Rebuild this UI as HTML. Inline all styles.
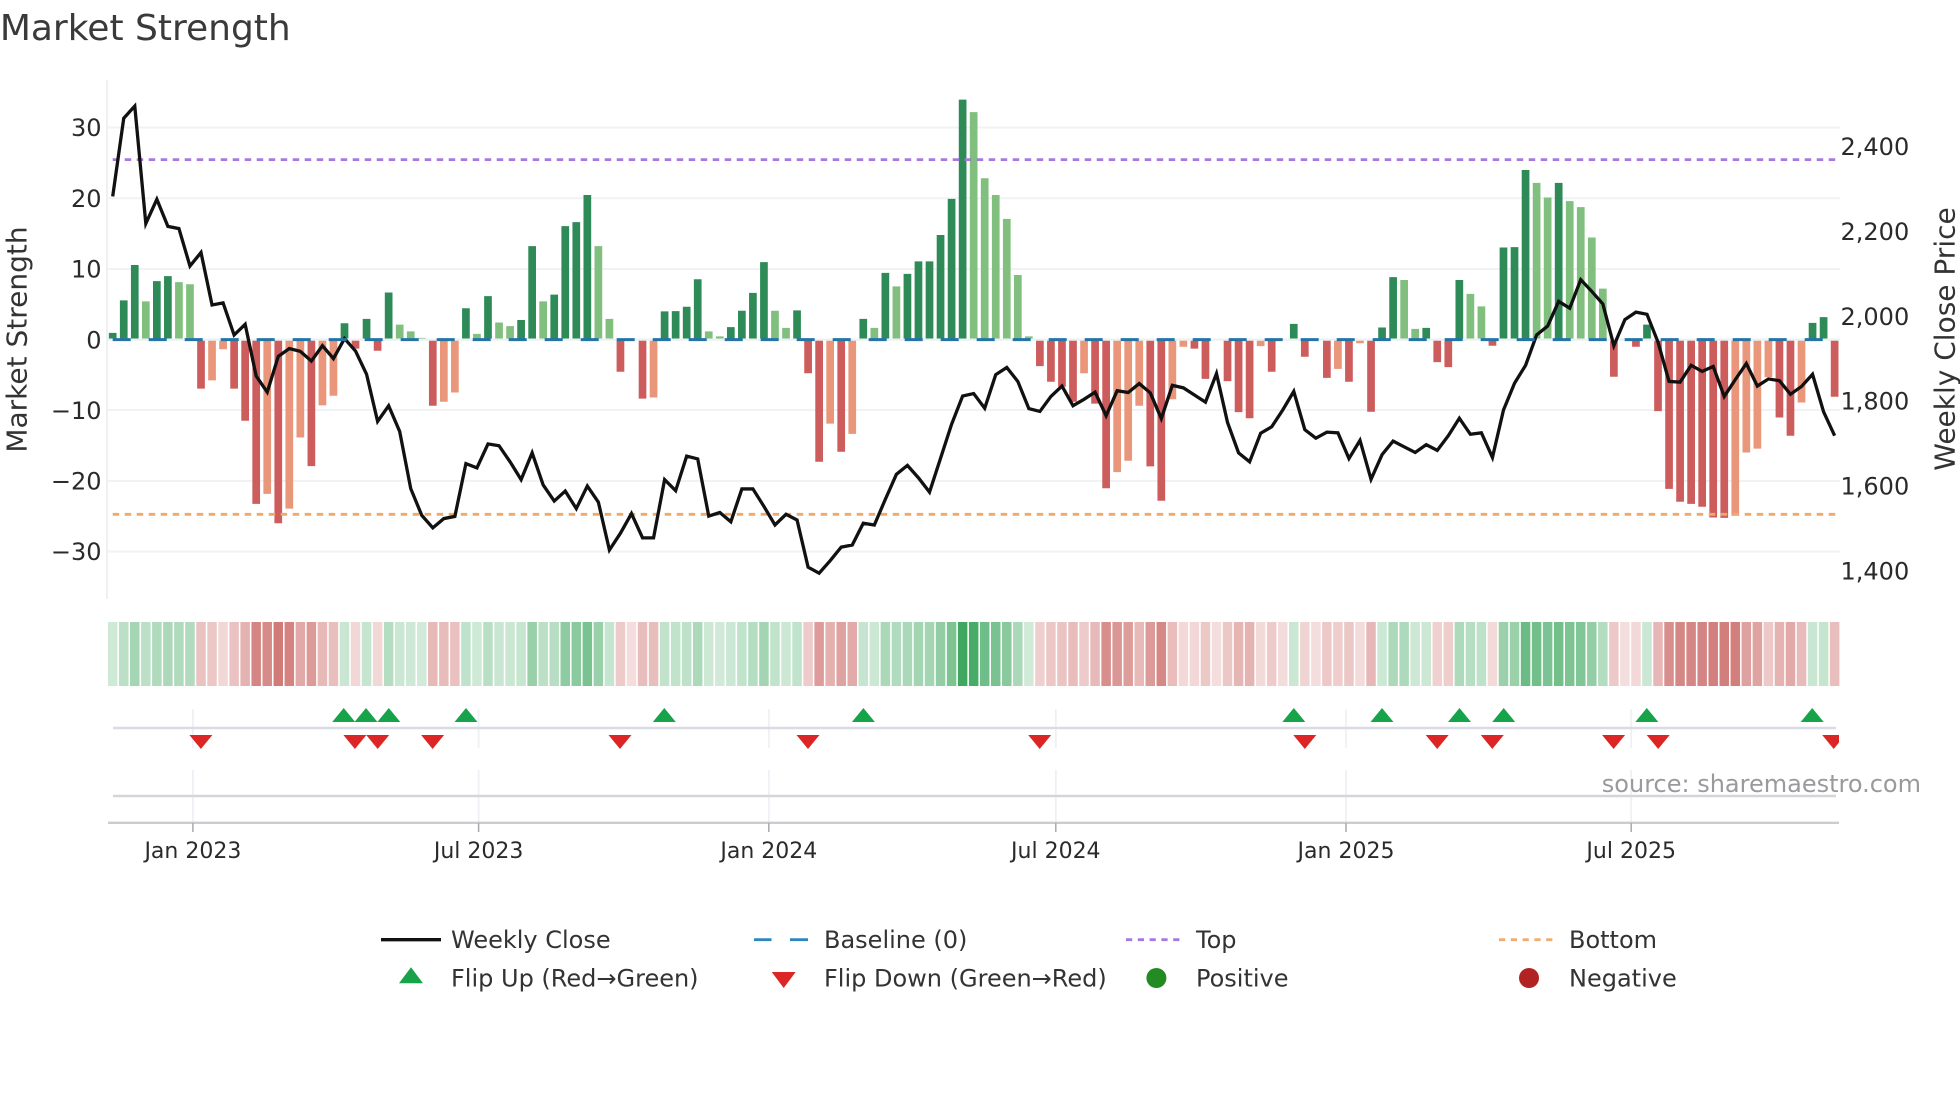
<!DOCTYPE html>
<html lang="en"><head><meta charset="utf-8"><title>Market Strength</title>
<style>
html,body{margin:0;padding:0;background:#fff;width:1960px;height:1102px;overflow:hidden}
svg{display:block}
text{font-family:"DejaVu Sans","Liberation Sans",sans-serif}
.nss path,.nss polyline{vector-effect:non-scaling-stroke}
</style></head><body>
<svg width="1960" height="1102" viewBox="0 0 1960 1102" xmlns="http://www.w3.org/2000/svg">
<rect width="1960" height="1102" fill="#fff"/>
<text x="-0.2" y="40" font-size="36" fill="#3a3a3a">Market Strength</text>

<!-- grid -->
<path d="M107 80V599" stroke="#eceef1" stroke-width="1.8" fill="none"/>
<path d="M108 127.5H1840M108 198.3H1840M108 269H1840M108 410H1840M108 481H1840M108 551.5H1840" stroke="#f0f2f6" stroke-width="2" fill="none"/>

<!-- bars -->
<g class="nss" transform="translate(112.7 60) scale(11.038 .35714)" fill="none" stroke-width="7.7">
<path stroke="#2e8b57" d="M0 782V764M1 782V673M2 782V574M4 782V619M5 782V605M21 782V737M23 782V725M25 782V651M32 782V695M34 782V661M37 782V728M38 782V521M40 782V657M41 782V465M42 782V454M43 782V378M50 782V704M51 782V703M52 782V691M53 782V614M56 782V748M57 782V702M58 782V652M59 782V566M62 782V701M68 782V725M70 782V596M72 782V599M73 782V564M74 782V564M75 782V490M76 782V389M77 782V111M107 782V739M115 782V749M116 782V608M119 782V750M122 782V616M126 782V525M127 782V524M128 782V308M131 782V344M139 782V741M154 782V736M155 782V720"/>
<path stroke="#81bf7e" d="M3 782V676M6 782V622M7 782V628M26 782V741M27 782V760M28 782V778M33 782V767M35 782V735M36 782V745M39 782V676M44 782V521M45 782V725M54 782V760M55 782V774M60 782V702M61 782V750M69 782V750M71 782V634M78 782V146M79 782V331M80 782V378M81 782V445M82 782V602M83 782V774M117 782V616M118 782V753M123 782V655M124 782V690M129 782V344M130 782V385M132 782V395M133 782V412M134 782V497M135 782V640"/>
<path stroke="#cd5c5c" d="M8 782V920M11 782V920M12 782V1010M13 782V1243M15 782V1297M18 782V1137M22 782V808M24 782V814M29 782V968M46 782V873M48 782V948M63 782V877M64 782V1125M66 782V1097M84 782V857M85 782V901M86 782V915M87 782V957M89 782V962M90 782V1199M94 782V1138M95 782V1234M98 782V808M99 782V893M101 782V899M102 782V986M103 782V1003M105 782V873M108 782V831M110 782V890M112 782V901M114 782V985M120 782V846M121 782V860M125 782V800M136 782V887M138 782V803M140 782V983M141 782V1201M142 782V1237M143 782V1243M144 782V1251M145 782V1281M146 782V1282M151 782V1001M152 782V1052M156 782V943"/>
<path stroke="#e9967a" d="M9 782V897M10 782V810M14 782V1215M16 782V1256M17 782V1057M19 782V967M20 782V940M30 782V957M31 782V931M49 782V945M65 782V1018M67 782V1047M88 782V877M91 782V1154M92 782V1122M93 782V968M96 782V950M97 782V803M104 782V801M106 782V784M111 782V865M113 782V793M137 782V785M147 782V1276M148 782V1099M149 782V1088M150 782V888M153 782V959"/>
</g>
<path d="M108 339.6H1840" stroke="#eaf2f2" stroke-width="2.2" fill="none"/>

<!-- thresholds -->
<path d="M112.7 159.6H1836" stroke="#a678e2" stroke-width="2.8" stroke-dasharray="6.5 5.5" fill="none"/>
<path d="M112.7 514.3H1836" stroke="#efa96b" stroke-width="2.8" stroke-dasharray="6.5 5.5" fill="none"/>

<!-- weekly close -->
<g class="nss" transform="translate(112.7 60) scale(11.038 .35714)" fill="none">
<polyline stroke="#111" stroke-width="3.3" stroke-linejoin="miter" stroke-miterlimit="4" points="0,382 1,163 2,129 3,458 4,390 5,466 6,472 7,577 8,539 9,686 10,680 11,770 12,740 13,885 14,930 15,830 16,808 17,816 18,843 19,800 20,836 21,780 22,815 23,880 24,1012 25,968 26,1040 27,1200 28,1275 29,1310 30,1284 31,1278 32,1130 33,1142 34,1075 35,1080 36,1125 37,1175 38,1100 39,1190 40,1235 41,1207 42,1256 43,1193 44,1238 45,1372 46,1325 47,1270 48,1338 49,1338 50,1175 51,1206 52,1109 53,1117 54,1277 55,1267 56,1293 57,1201 58,1201 59,1250 60,1302 61,1272 62,1288 63,1420 64,1437 65,1402 66,1364 67,1358 68,1297 69,1302 70,1230 71,1160 72,1135 73,1170 74,1210 75,1115 76,1020 77,941 78,934 79,975 80,881 81,861 82,900 83,976 84,984 85,942 86,913 87,968 88,950 89,930 90,996 91,926 92,931 93,906 94,932 95,1004 96,911 97,918 98,938 99,958 100,878 101,1015 102,1100 103,1125 104,1045 105,1027 106,980 107,928 108,1035 109,1059 110,1042 111,1044 112,1116 113,1065 114,1174 115,1105 116,1067 117,1083 118,1099 119,1077 120,1093 121,1052 122,1003 123,1048 124,1044 125,1113 126,980 127,905 128,855 129,770 130,745 131,676 132,695 133,615 134,648 135,683 136,800 137,727 138,706 139,712 140,790 141,900 142,902 143,855 144,872 145,858 146,942 147,895 148,850 149,913 150,893 151,898 152,936 153,914 154,880 155,985 156,1052"/>
</g>

<!-- baseline -->
<path d="M112.7 339.6H1834.7" stroke="#2474a8" stroke-width="3" stroke-dasharray="18 18" fill="none"/>

<!-- left ticks -->
<g font-size="24" fill="#2a2a2a" text-anchor="end">
<text x="101.5" y="136.2">30</text>
<text x="101.5" y="206.9">20</text>
<text x="101.5" y="277.7">10</text>
<text x="101.5" y="348.3">0</text>
<text x="101.5" y="418.8">−10</text>
<text x="101.5" y="489.7">−20</text>
<text x="101.5" y="560.2">−30</text>
</g>
<text transform="translate(26.5 339.5) rotate(-90)" font-size="28" fill="#333" text-anchor="middle">Market Strength</text>

<!-- right ticks -->
<g font-size="24" fill="#2a2a2a">
<text x="1840.5" y="154.9">2,400</text>
<text x="1840.5" y="239.9">2,200</text>
<text x="1840.5" y="324.9">2,000</text>
<text x="1840.5" y="409.7">1,800</text>
<text x="1840.5" y="494.6">1,600</text>
<text x="1840.5" y="579.5">1,400</text>
</g>
<text transform="translate(1954.5 339) rotate(-90)" font-size="28" fill="#333" text-anchor="middle">Weekly Close Price</text>

<!-- strip -->
<g class="nss" transform="translate(112.7 622) scale(11.038 1)" fill="none" stroke-width="9.5" stroke="#1a9641">
<path stroke-opacity=".05" d="M0 0V64M1 0V64M2 0V64M3 0V64M4 0V64M5 0V64M6 0V64M7 0V64M21 0V64M23 0V64M25 0V64M26 0V64M27 0V64M28 0V64M32 0V64M33 0V64M34 0V64M35 0V64M36 0V64M37 0V64M38 0V64M39 0V64M40 0V64M41 0V64M42 0V64M43 0V64M44 0V64M45 0V64M50 0V64M51 0V64M52 0V64M53 0V64M54 0V64M55 0V64M56 0V64M57 0V64M58 0V64M59 0V64M60 0V64M61 0V64M62 0V64M68 0V64M69 0V64M70 0V64M71 0V64M72 0V64M73 0V64M74 0V64M75 0V64M76 0V64M77 0V64M78 0V64M79 0V64M80 0V64M81 0V64M82 0V64M83 0V64M107 0V64M115 0V64M116 0V64M117 0V64M118 0V64M119 0V64M122 0V64M123 0V64M124 0V64M126 0V64M127 0V64M128 0V64M129 0V64M130 0V64M131 0V64M132 0V64M133 0V64M134 0V64M135 0V64M139 0V64M154 0V64M155 0V64"/>
<path stroke-opacity=".168" d="M0 0V64"/><path stroke-opacity=".26" d="M1 0V64"/><path stroke-opacity=".36" d="M2 0V64"/><path stroke-opacity=".257" d="M3 0V64"/><path stroke-opacity=".315" d="M4 0V64"/><path stroke-opacity=".329" d="M5 0V64"/><path stroke-opacity=".312" d="M6 0V64"/><path stroke-opacity=".306" d="M7 0V64"/>
<path stroke-opacity=".195" d="M21 0V64"/><path stroke-opacity=".208" d="M23 0V64"/><path stroke-opacity=".282" d="M25 0V64"/><path stroke-opacity=".191" d="M26 0V64"/><path stroke-opacity=".172" d="M27 0V64"/><path stroke-opacity=".154" d="M28 0V64"/>
<path stroke-opacity=".238" d="M32 0V64"/><path stroke-opacity=".165" d="M33 0V64"/><path stroke-opacity=".272" d="M34 0V64"/><path stroke-opacity=".197" d="M35 0V64"/><path stroke-opacity=".187" d="M36 0V64"/><path stroke-opacity=".205" d="M37 0V64"/><path stroke-opacity=".414" d="M38 0V64"/><path stroke-opacity=".257" d="M39 0V64"/><path stroke-opacity=".276" d="M40 0V64"/><path stroke-opacity=".47" d="M41 0V64"/><path stroke-opacity=".481" d="M42 0V64"/><path stroke-opacity=".558" d="M43 0V64"/><path stroke-opacity=".414" d="M44 0V64"/><path stroke-opacity=".208" d="M45 0V64"/>
<path stroke-opacity=".229" d="M50 0V64"/><path stroke-opacity=".23" d="M51 0V64"/><path stroke-opacity=".242" d="M52 0V64"/><path stroke-opacity=".32" d="M53 0V64"/><path stroke-opacity=".172" d="M54 0V64"/><path stroke-opacity=".158" d="M55 0V64"/><path stroke-opacity=".184" d="M56 0V64"/><path stroke-opacity=".231" d="M57 0V64"/><path stroke-opacity=".281" d="M58 0V64"/><path stroke-opacity=".368" d="M59 0V64"/><path stroke-opacity=".231" d="M60 0V64"/><path stroke-opacity=".182" d="M61 0V64"/><path stroke-opacity=".232" d="M62 0V64"/>
<path stroke-opacity=".208" d="M68 0V64"/><path stroke-opacity=".182" d="M69 0V64"/><path stroke-opacity=".338" d="M70 0V64"/><path stroke-opacity=".3" d="M71 0V64"/><path stroke-opacity=".335" d="M72 0V64"/><path stroke-opacity=".37" d="M73 0V64"/><path stroke-opacity=".37" d="M74 0V64"/><path stroke-opacity=".445" d="M75 0V64"/><path stroke-opacity=".547" d="M76 0V64"/><path stroke-opacity=".828" d="M77 0V64"/><path stroke-opacity=".792" d="M78 0V64"/><path stroke-opacity=".606" d="M79 0V64"/><path stroke-opacity=".558" d="M80 0V64"/><path stroke-opacity=".49" d="M81 0V64"/><path stroke-opacity=".332" d="M82 0V64"/><path stroke-opacity=".158" d="M83 0V64"/>
<path stroke-opacity=".193" d="M107 0V64"/><path stroke-opacity=".183" d="M115 0V64"/><path stroke-opacity=".326" d="M116 0V64"/><path stroke-opacity=".318" d="M117 0V64"/><path stroke-opacity=".179" d="M118 0V64"/><path stroke-opacity=".182" d="M119 0V64"/><path stroke-opacity=".318" d="M122 0V64"/><path stroke-opacity=".278" d="M123 0V64"/><path stroke-opacity=".243" d="M124 0V64"/>
<path stroke-opacity=".41" d="M126 0V64"/><path stroke-opacity=".41" d="M127 0V64"/><path stroke-opacity=".629" d="M128 0V64"/><path stroke-opacity=".592" d="M129 0V64"/><path stroke-opacity=".551" d="M130 0V64"/><path stroke-opacity=".592" d="M131 0V64"/><path stroke-opacity=".541" d="M132 0V64"/><path stroke-opacity=".524" d="M133 0V64"/><path stroke-opacity=".438" d="M134 0V64"/><path stroke-opacity=".293" d="M135 0V64"/><path stroke-opacity=".191" d="M139 0V64"/><path stroke-opacity=".196" d="M154 0V64"/><path stroke-opacity=".213" d="M155 0V64"/>
</g>
<g class="nss" transform="translate(112.7 622) scale(11.038 1)" fill="none" stroke-width="9.5" stroke="#b01c18">
<path stroke-opacity=".265" d="M8 0V64"/><path stroke-opacity=".246" d="M9 0V64"/><path stroke-opacity=".173" d="M10 0V64"/><path stroke-opacity=".265" d="M11 0V64"/><path stroke-opacity=".34" d="M12 0V64"/><path stroke-opacity=".534" d="M13 0V64"/><path stroke-opacity=".51" d="M14 0V64"/><path stroke-opacity=".579" d="M15 0V64"/><path stroke-opacity=".545" d="M16 0V64"/><path stroke-opacity=".379" d="M17 0V64"/><path stroke-opacity=".446" d="M18 0V64"/><path stroke-opacity=".304" d="M19 0V64"/><path stroke-opacity=".282" d="M20 0V64"/>
<path stroke-opacity=".172" d="M22 0V64"/><path stroke-opacity=".177" d="M24 0V64"/><path stroke-opacity=".305" d="M29 0V64"/><path stroke-opacity=".296" d="M30 0V64"/><path stroke-opacity=".274" d="M31 0V64"/>
<path stroke-opacity=".226" d="M46 0V64"/><path stroke-opacity=".15" d="M47 0V64"/><path stroke-opacity=".288" d="M48 0V64"/><path stroke-opacity=".286" d="M49 0V64"/>
<path stroke-opacity=".229" d="M63 0V64"/><path stroke-opacity=".436" d="M64 0V64"/><path stroke-opacity=".347" d="M65 0V64"/><path stroke-opacity=".413" d="M66 0V64"/><path stroke-opacity=".371" d="M67 0V64"/>
<path stroke-opacity=".213" d="M84 0V64"/><path stroke-opacity=".249" d="M85 0V64"/><path stroke-opacity=".261" d="M86 0V64"/><path stroke-opacity=".296" d="M87 0V64"/><path stroke-opacity=".229" d="M88 0V64"/><path stroke-opacity=".3" d="M89 0V64"/><path stroke-opacity=".498" d="M90 0V64"/><path stroke-opacity=".46" d="M91 0V64"/><path stroke-opacity=".433" d="M92 0V64"/><path stroke-opacity=".305" d="M93 0V64"/><path stroke-opacity=".447" d="M94 0V64"/><path stroke-opacity=".527" d="M95 0V64"/><path stroke-opacity=".29" d="M96 0V64"/><path stroke-opacity=".168" d="M97 0V64"/><path stroke-opacity=".172" d="M98 0V64"/><path stroke-opacity=".243" d="M99 0V64"/><path stroke-opacity=".15" d="M100 0V64"/><path stroke-opacity=".248" d="M101 0V64"/><path stroke-opacity=".32" d="M102 0V64"/><path stroke-opacity=".334" d="M103 0V64"/><path stroke-opacity=".166" d="M104 0V64"/><path stroke-opacity=".226" d="M105 0V64"/><path stroke-opacity=".152" d="M106 0V64"/>
<path stroke-opacity=".191" d="M108 0V64"/><path stroke-opacity=".15" d="M109 0V64"/><path stroke-opacity=".24" d="M110 0V64"/><path stroke-opacity=".219" d="M111 0V64"/><path stroke-opacity=".249" d="M112 0V64"/><path stroke-opacity=".159" d="M113 0V64"/><path stroke-opacity=".319" d="M114 0V64"/>
<path stroke-opacity=".203" d="M120 0V64"/><path stroke-opacity=".215" d="M121 0V64"/><path stroke-opacity=".165" d="M125 0V64"/><path stroke-opacity=".238" d="M136 0V64"/><path stroke-opacity=".15" d="M137 0V64"/><path stroke-opacity=".168" d="M138 0V64"/>
<path stroke-opacity=".318" d="M140 0V64"/><path stroke-opacity=".499" d="M141 0V64"/><path stroke-opacity=".529" d="M142 0V64"/><path stroke-opacity=".534" d="M143 0V64"/><path stroke-opacity=".541" d="M144 0V64"/><path stroke-opacity=".566" d="M145 0V64"/><path stroke-opacity=".567" d="M146 0V64"/><path stroke-opacity=".562" d="M147 0V64"/><path stroke-opacity=".414" d="M148 0V64"/><path stroke-opacity=".405" d="M149 0V64"/><path stroke-opacity=".238" d="M150 0V64"/><path stroke-opacity=".333" d="M151 0V64"/><path stroke-opacity=".375" d="M152 0V64"/><path stroke-opacity=".298" d="M153 0V64"/><path stroke-opacity=".284" d="M156 0V64"/>
</g>

<!-- vertical gridlines lower panels -->
<path d="M192.9 709V748M478.6 709V748M768.8 709V748M1055.8 709V748M1346 709V748M1631.2 709V748M192.9 770V823M478.6 770V823M768.8 770V823M1055.8 770V823M1346 770V823M1631.2 770V823" stroke="#eef0f5" stroke-width="1.8" fill="none"/>
<path d="M113 728H1836" stroke="#d9dce4" stroke-width="2.4" fill="none"/>
<path d="M113 796H1836" stroke="#d4d5d9" stroke-width="2.4" fill="none"/>
<path d="M108 822.8H1839" stroke="#cbcbd0" stroke-width="2.4" fill="none"/>
<path d="M192.9 823V832M478.6 823V832M768.8 823V832M1055.8 823V832M1346 823V832M1631.2 823V832" stroke="#a9a9a9" stroke-width="1.5" fill="none"/>

<!-- flips up -->
<g fill="#16a34a">
<polygon points="332.2,722 343.7,708 355.2,722"/>
<polygon points="354.5,722 366,708 377.5,722"/>
<polygon points="377.3,722 388.8,708 400.3,722"/>
<polygon points="454.5,722 466,708 477.5,722"/>
<polygon points="652.8,722 664.3,708 675.8,722"/>
<polygon points="851.9,722 863.4,708 874.9,722"/>
<polygon points="1282.3,722 1293.8,708 1305.3,722"/>
<polygon points="1370.5,722 1382,708 1393.5,722"/>
<polygon points="1448,722 1459.5,708 1471,722"/>
<polygon points="1492.2,722 1503.7,708 1515.2,722"/>
<polygon points="1635.3,722 1646.8,708 1658.3,722"/>
<polygon points="1800.7,722 1812.2,708 1823.7,722"/>
</g>
<!-- flips down -->
<g fill="#dc2626">
<polygon points="189.4,735 200.9,749 212.4,735"/>
<polygon points="343.4,735 354.9,749 366.4,735"/>
<polygon points="366.2,735 377.7,749 389.2,735"/>
<polygon points="421.1,735 432.6,749 444.1,735"/>
<polygon points="608.5,735 620,749 631.5,735"/>
<polygon points="796.5,735 808,749 819.5,735"/>
<polygon points="1028.2,735 1039.7,749 1051.2,735"/>
<polygon points="1293.3,735 1304.8,749 1316.3,735"/>
<polygon points="1425.7,735 1437.2,749 1448.7,735"/>
<polygon points="1480.8,735 1492.3,749 1503.8,735"/>
<polygon points="1602.1,735 1613.6,749 1625.1,735"/>
<polygon points="1646.7,735 1658.2,749 1669.7,735"/>
<polygon points="1822.2,735 1839,735 1839,742.5 1833.7,749"/>
</g>

<!-- x ticks -->
<g font-size="22" fill="#2a2a2a" text-anchor="middle">
<text x="192.9" y="858">Jan 2023</text>
<text x="478.6" y="858">Jul 2023</text>
<text x="768.8" y="858">Jan 2024</text>
<text x="1055.8" y="858">Jul 2024</text>
<text x="1346" y="858">Jan 2025</text>
<text x="1631.2" y="858">Jul 2025</text>
</g>
<text x="1921" y="792" font-size="24" fill="#9a9a9a" text-anchor="end">source: sharemaestro.com</text>

<!-- legend -->
<path d="M381 939.7H441" stroke="#111" stroke-width="3.3" fill="none"/>
<path d="M754 939.7H771.5M790 939.7H808" stroke="#2e86bd" stroke-width="2.8" fill="none"/>
<path d="M1126 939.7H1180.5" stroke="#a678e2" stroke-width="2.8" stroke-dasharray="6.2 5.6" fill="none"/>
<path d="M1499 939.7H1553.7" stroke="#efad75" stroke-width="2.8" stroke-dasharray="6.2 5.6" fill="none"/>
<polygon points="399,983.3 411,967.3 423,983.3" fill="#16a34a"/>
<polygon points="771.7,972 783.7,988 795.7,972" fill="#dc2626"/>
<circle cx="1156.4" cy="978" r="10" fill="#228b22"/>
<circle cx="1529" cy="978" r="10" fill="#b22222"/>
<g font-size="24" fill="#333">
<text x="451" y="948">Weekly Close</text>
<text x="824" y="948">Baseline (0)</text>
<text x="1196" y="948">Top</text>
<text x="1569" y="948">Bottom</text>
<text x="451" y="986.4">Flip Up (Red→Green)</text>
<text x="824" y="986.4">Flip Down (Green→Red)</text>
<text x="1196" y="986.4">Positive</text>
<text x="1569" y="986.4">Negative</text>
</g>
</svg>
</body></html>
